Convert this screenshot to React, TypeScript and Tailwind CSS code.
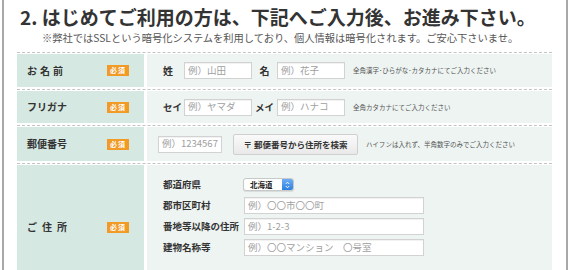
import React from "react";

const F = { fontFamily: '"Noto Sans CJK JP", "Noto Sans", sans-serif' };

function Badge() {
  return (
    <span className="inline-flex items-center justify-center w-[22px] h-[11px] bg-[#f29a26] text-white text-[7px] font-bold leading-none tracking-[1px]">
      必須
    </span>
  );
}

function Label({ chars, gap }: { chars: string[]; gap: string }) {
  return (
    <div className="w-[127px] bg-[#d5e8e2] flex items-center pl-[10px] pr-[15px] justify-between">
      <span className={`flex ${gap} text-[10px] font-bold text-[#333] leading-none`}>
        {chars.map((c, i) => (
          <span key={i}>{c}</span>
        ))}
      </span>
      <Badge />
    </div>
  );
}

function Input({ w, ph, h = 17 }: { w: number; ph: string; h?: number }) {
  return (
    <div
      className="bg-white border border-[#d2d2d2] shadow-[inset_0_1px_1px_rgba(0,0,0,0.06)] flex items-center pl-[3px] text-[9.5px] text-[#a0a0a0] leading-none whitespace-nowrap overflow-hidden"
      style={{ width: w, height: h }}
    >
      {ph}
    </div>
  );
}

function Note({ text, ml }: { text: string; ml: string }) {
  return <span className={`text-[6.5px] text-[#555] leading-none whitespace-nowrap ${ml}`}>{text}</span>;
}

export default function App() {
  return (
    <div className="w-[570px] h-[270px] overflow-hidden bg-white" style={F}>
      <div className="ml-[2px] w-[566px] h-[270px] border-x-2 border-[#a8a8a8] pl-[13px]">
        <div className="w-[535px]">
          <div className="pt-[6px] pl-[3px] text-[19px] font-bold text-[#333] leading-[22px] whitespace-nowrap">
            2. はじめてご利用の方は、下記へご入力後、お進み下さい。
          </div>
          <div className="ml-[25px] mt-[3px] text-[10.25px] text-[#555] leading-[13px] whitespace-nowrap">
            ※弊社ではSSLという暗号化システムを利用しており、個人情報は暗号化されます。ご安心下さいませ。
          </div>

          <div className="mt-[8px]">
            {/* Row 1 */}
            <div className="border-t border-dashed border-[#c4c4c4] pt-[1px] pb-[2px]">
              <div className="flex h-[33px] gap-[3px]">
                <Label chars={["お", "名", "前"]} gap="gap-[3px]" />
                <div className="flex-1 bg-[#eef4f2] flex items-center pl-[16px]">
                  <span className="w-[21px] text-[10px] font-bold text-[#333]">姓</span>
                  <Input w={68} ph="例）山田" />
                  <span className="w-[25px] text-center text-[10px] font-bold text-[#333]">名</span>
                  <Input w={68} ph="例）花子" />
                  <Note text="全角漢字･ひらがな･カタカナにてご入力ください" ml="ml-[8px]" />
                </div>
              </div>
            </div>
            {/* Row 2 */}
            <div className="border-t border-dashed border-[#c4c4c4] pt-[1px] pb-[2px]">
              <div className="flex h-[32px] gap-[3px]">
                <Label chars={["フリガナ"]} gap="gap-0" />
                <div className="flex-1 bg-[#eef4f2] flex items-center pl-[16px]">
                  <span className="w-[21px] text-[9.5px] font-bold text-[#333] whitespace-nowrap">セイ</span>
                  <Input w={68} ph="例）ヤマダ" />
                  <span className="w-[25px] text-center text-[9.5px] font-bold text-[#333] whitespace-nowrap">メイ</span>
                  <Input w={68} ph="例）ハナコ" />
                  <Note text="全角カタカナにてご入力ください" ml="ml-[8px]" />
                </div>
              </div>
            </div>
            {/* Row 3 */}
            <div className="border-t border-dashed border-[#c4c4c4] pt-[1px] pb-[2px]">
              <div className="flex h-[34px] gap-[3px]">
                <Label chars={["郵便番号"]} gap="gap-0" />
                <div className="flex-1 bg-[#eef4f2] flex items-center pl-[11px]">
                  <Input w={64} ph="例）1234567" />
                  <div className="ml-[11px] w-[125px] h-[21px] rounded-[2px] border border-[#cfcfcf] bg-gradient-to-b from-[#fafafa] to-[#e9e9e9] flex items-center justify-center text-[8.5px] font-bold text-[#333] whitespace-nowrap">
                    〒 郵便番号から住所を検索
                  </div>
                  <Note text="ハイフンは入れず、半角数字のみでご入力ください" ml="ml-[8px]" />
                </div>
              </div>
            </div>
            {/* Row 4 */}
            <div className="border-t border-dashed border-[#c4c4c4] pt-[1px]">
              <div className="flex gap-[3px]">
                <Label chars={["ご", "住", "所"]} gap="gap-[5px]" />
                <div className="flex-1 bg-[#eef4f2] pl-[16px] pt-[11px] pb-[33px] flex flex-col gap-[4px]">
                  <div className="flex items-center h-[17px]">
                    <span className="w-[80px] text-[9.5px] font-bold text-[#333] whitespace-nowrap">都道府県</span>
                    <div className="w-[51px] h-[13px] rounded-[3px] bg-white border border-[#c8c8c8] shadow-[0_1px_1px_rgba(0,0,0,0.1)] flex items-center justify-between overflow-hidden">
                      <span className="pl-[6px] text-[7.5px] font-bold text-[#222] leading-none">北海道</span>
                      <span className="w-[11px] h-full bg-gradient-to-b from-[#6aaef5] to-[#2d7fe0] flex items-center justify-center">
                        <svg width="5" height="8" viewBox="0 0 5 8">
                          <path d="M0.8 3 L2.5 1.2 L4.2 3" fill="none" stroke="white" strokeWidth="0.9" />
                          <path d="M0.8 5 L2.5 6.8 L4.2 5" fill="none" stroke="white" strokeWidth="0.9" />
                        </svg>
                      </span>
                    </div>
                  </div>
                  <div className="flex items-center h-[17px]">
                    <span className="w-[81px] text-[9.5px] font-bold text-[#333] whitespace-nowrap">郡市区町村</span>
                    <Input w={180} ph="例）〇〇市〇〇町" />
                  </div>
                  <div className="flex items-center h-[17px]">
                    <span className="w-[81px] text-[9.5px] font-bold text-[#333] whitespace-nowrap">番地等以降の住所</span>
                    <Input w={180} ph="例）1-2-3" />
                  </div>
                  <div className="flex items-center h-[17px]">
                    <span className="w-[81px] text-[9.5px] font-bold text-[#333] whitespace-nowrap">建物名称等</span>
                    <Input w={180} ph="例）〇〇マンション　〇号室" />
                  </div>
                </div>
              </div>
            </div>
          </div>
        </div>
      </div>
    </div>
  );
}
